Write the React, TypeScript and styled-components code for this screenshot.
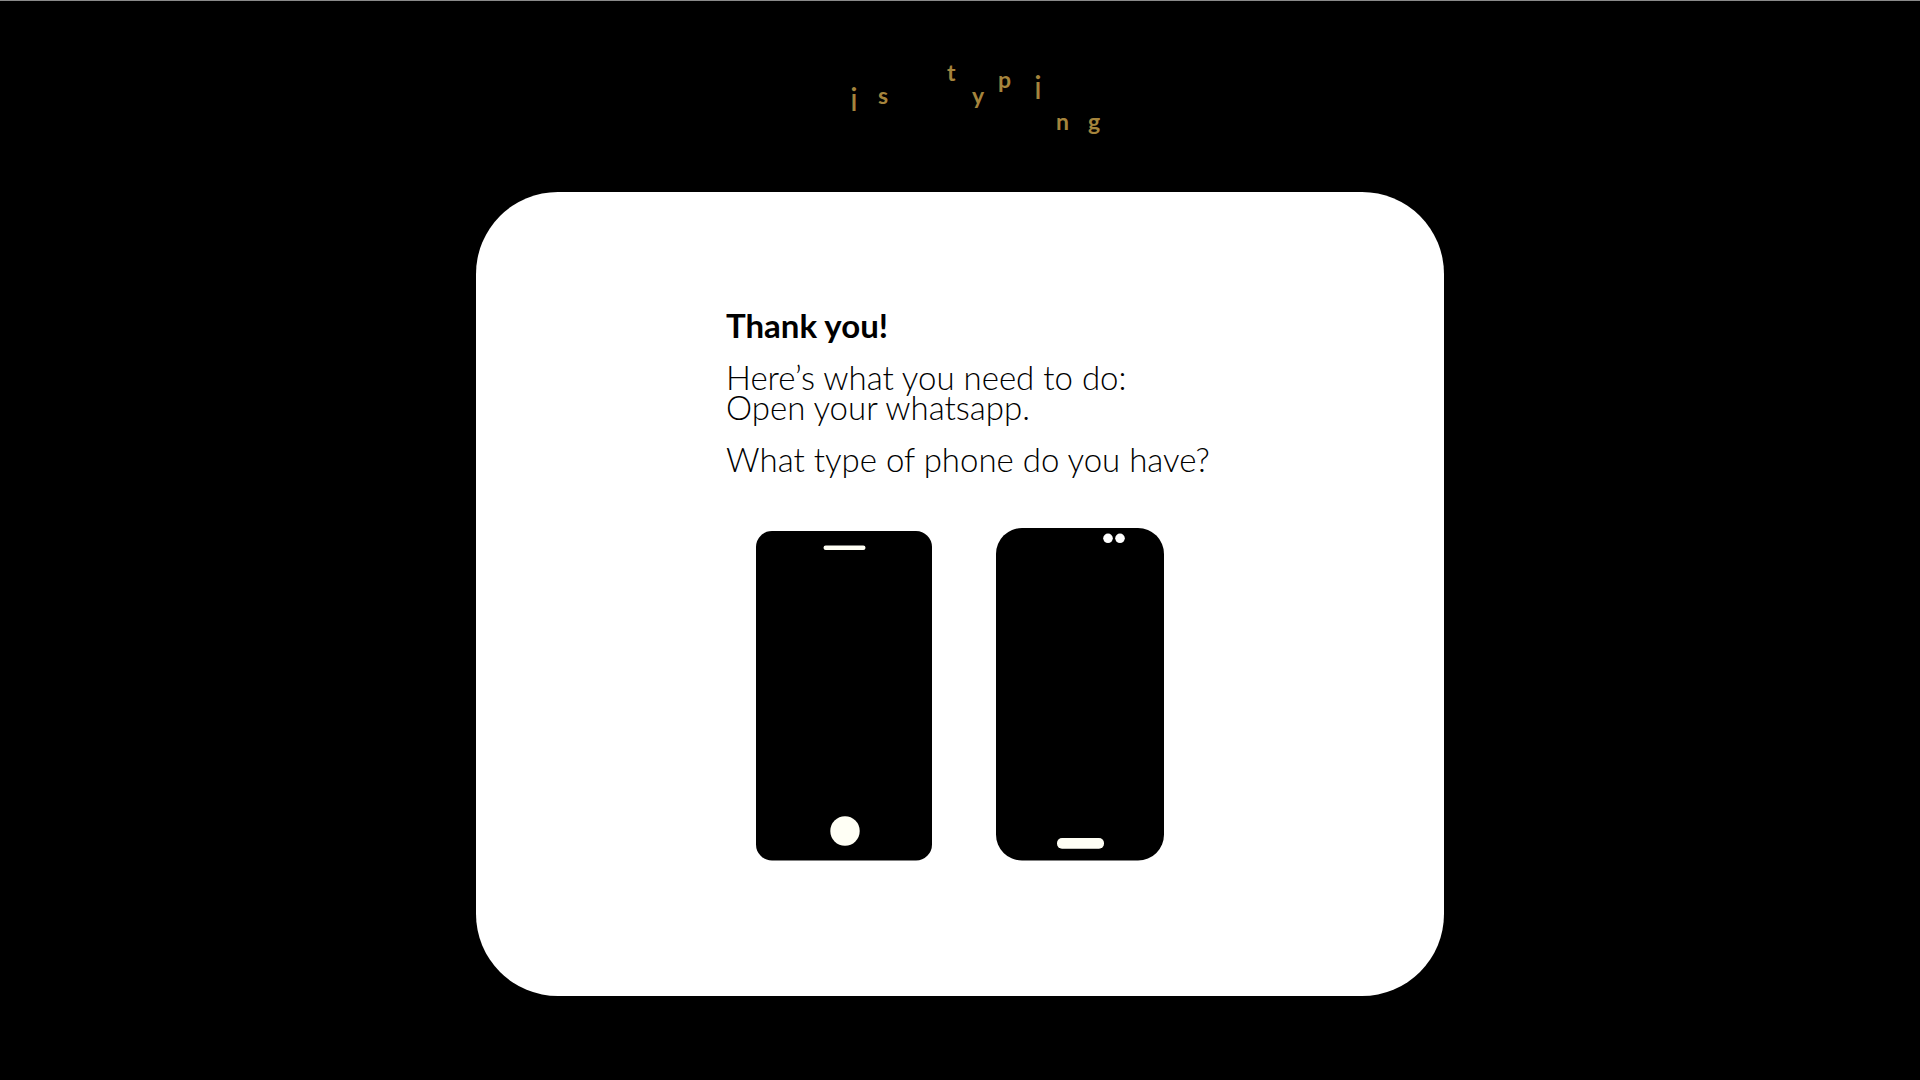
import React from "react";
import styled, { createGlobalStyle } from "styled-components";

const GlobalStyle = createGlobalStyle`
  *, *::before, *::after { box-sizing: border-box; }
  html { background: #000; }
  body {
    margin: 0;
    background: #000;
    color: #000;
    font-family: Lato, "Open Sans", sans-serif;
  }
`;

const Page = styled.div`
  min-height: 100vh;
  display: flex;
  flex-direction: column;
  align-items: center;
  padding-bottom: 84px;
  border-top: 1px solid #8a8a8a;
`;

const Logo = styled.h1`
  position: relative;
  width: 260px;
  height: 191px;
  margin: 0;
  color: #a5843c;
`;

const Letter = styled.span<{ $x: number; $y: number; $large?: boolean }>`
  position: absolute;
  left: ${(p) => p.$x}px;
  top: ${(p) => p.$y}px;
  font-size: ${(p) => (p.$large ? 33 : 23)}px;
  font-weight: ${(p) => (p.$large ? 400 : 700)};
  line-height: 32px;
`;

const Card = styled.main`
  width: 968px;
  max-width: 100%;
  padding: 118px 0 135px;
  border-radius: 82px;
  background: #fff;
`;

const Message = styled.section`
  display: flex;
  flex-direction: column;
  gap: 22px;
  padding-left: 250px;
  font-size: 33px;
  line-height: 30px;
  font-weight: 300;
`;

const Title = styled.h2`
  margin: 0;
  font-size: 33px;
  font-weight: 700;
`;

const Text = styled.p`
  margin: 0;
`;

const Phones = styled.div`
  display: flex;
  justify-content: center;
  align-items: flex-end;
  gap: 64px;
  margin-top: 54px;
`;

const PhoneButton = styled.button`
  display: block;
  padding: 0;
  border: 0;
  background: none;
  cursor: pointer;

  svg { display: block; }
`;

const letters = [
  { char: "i", x: 20, y: 81, large: true },
  { char: "s", x: 48, y: 78 },
  { char: "t", x: 117, y: 55 },
  { char: "y", x: 142, y: 78 },
  { char: "p", x: 168, y: 62 },
  { char: "i", x: 204, y: 69, large: true },
  { char: "n", x: 226, y: 104 },
  { char: "g", x: 258, y: 104 },
];

export default function App() {
  return (
    <>
      <GlobalStyle />
      <Page>
        <Logo>
          {letters.map((l, i) => (
            <Letter key={i} $x={l.x} $y={l.y} $large={l.large}>
              {l.char}
            </Letter>
          ))}
        </Logo>
        <Card>
          <Message>
            <Title>Thank you!</Title>
            <Text>
              Here’s what you need to do:
              <br />
              Open your whatsapp.
            </Text>
            <Text>What type of phone do you have?</Text>
          </Message>
          <Phones>
            <PhoneButton type="button" aria-label="iPhone">
              <svg width="176" height="330" viewBox="0 0 176 330">
                <rect width="176" height="329.5" rx="16" />
                <rect x="67.5" y="14.5" width="42" height="4.5" rx="2.2" fill="#fffff5" />
                <circle cx="89" cy="300" r="14.7" fill="#fffff5" />
              </svg>
            </PhoneButton>
            <PhoneButton type="button" aria-label="Android">
              <svg width="168" height="333" viewBox="0 0 168 333">
                <rect width="168" height="332.5" rx="26" />
                <circle cx="112" cy="10.3" r="4.8" fill="#fff" />
                <circle cx="124" cy="10.3" r="4.8" fill="#fff" />
                <rect x="61" y="310" width="47" height="10.7" rx="5" fill="#fffff5" />
              </svg>
            </PhoneButton>
          </Phones>
        </Card>
      </Page>
    </>
  );
}
